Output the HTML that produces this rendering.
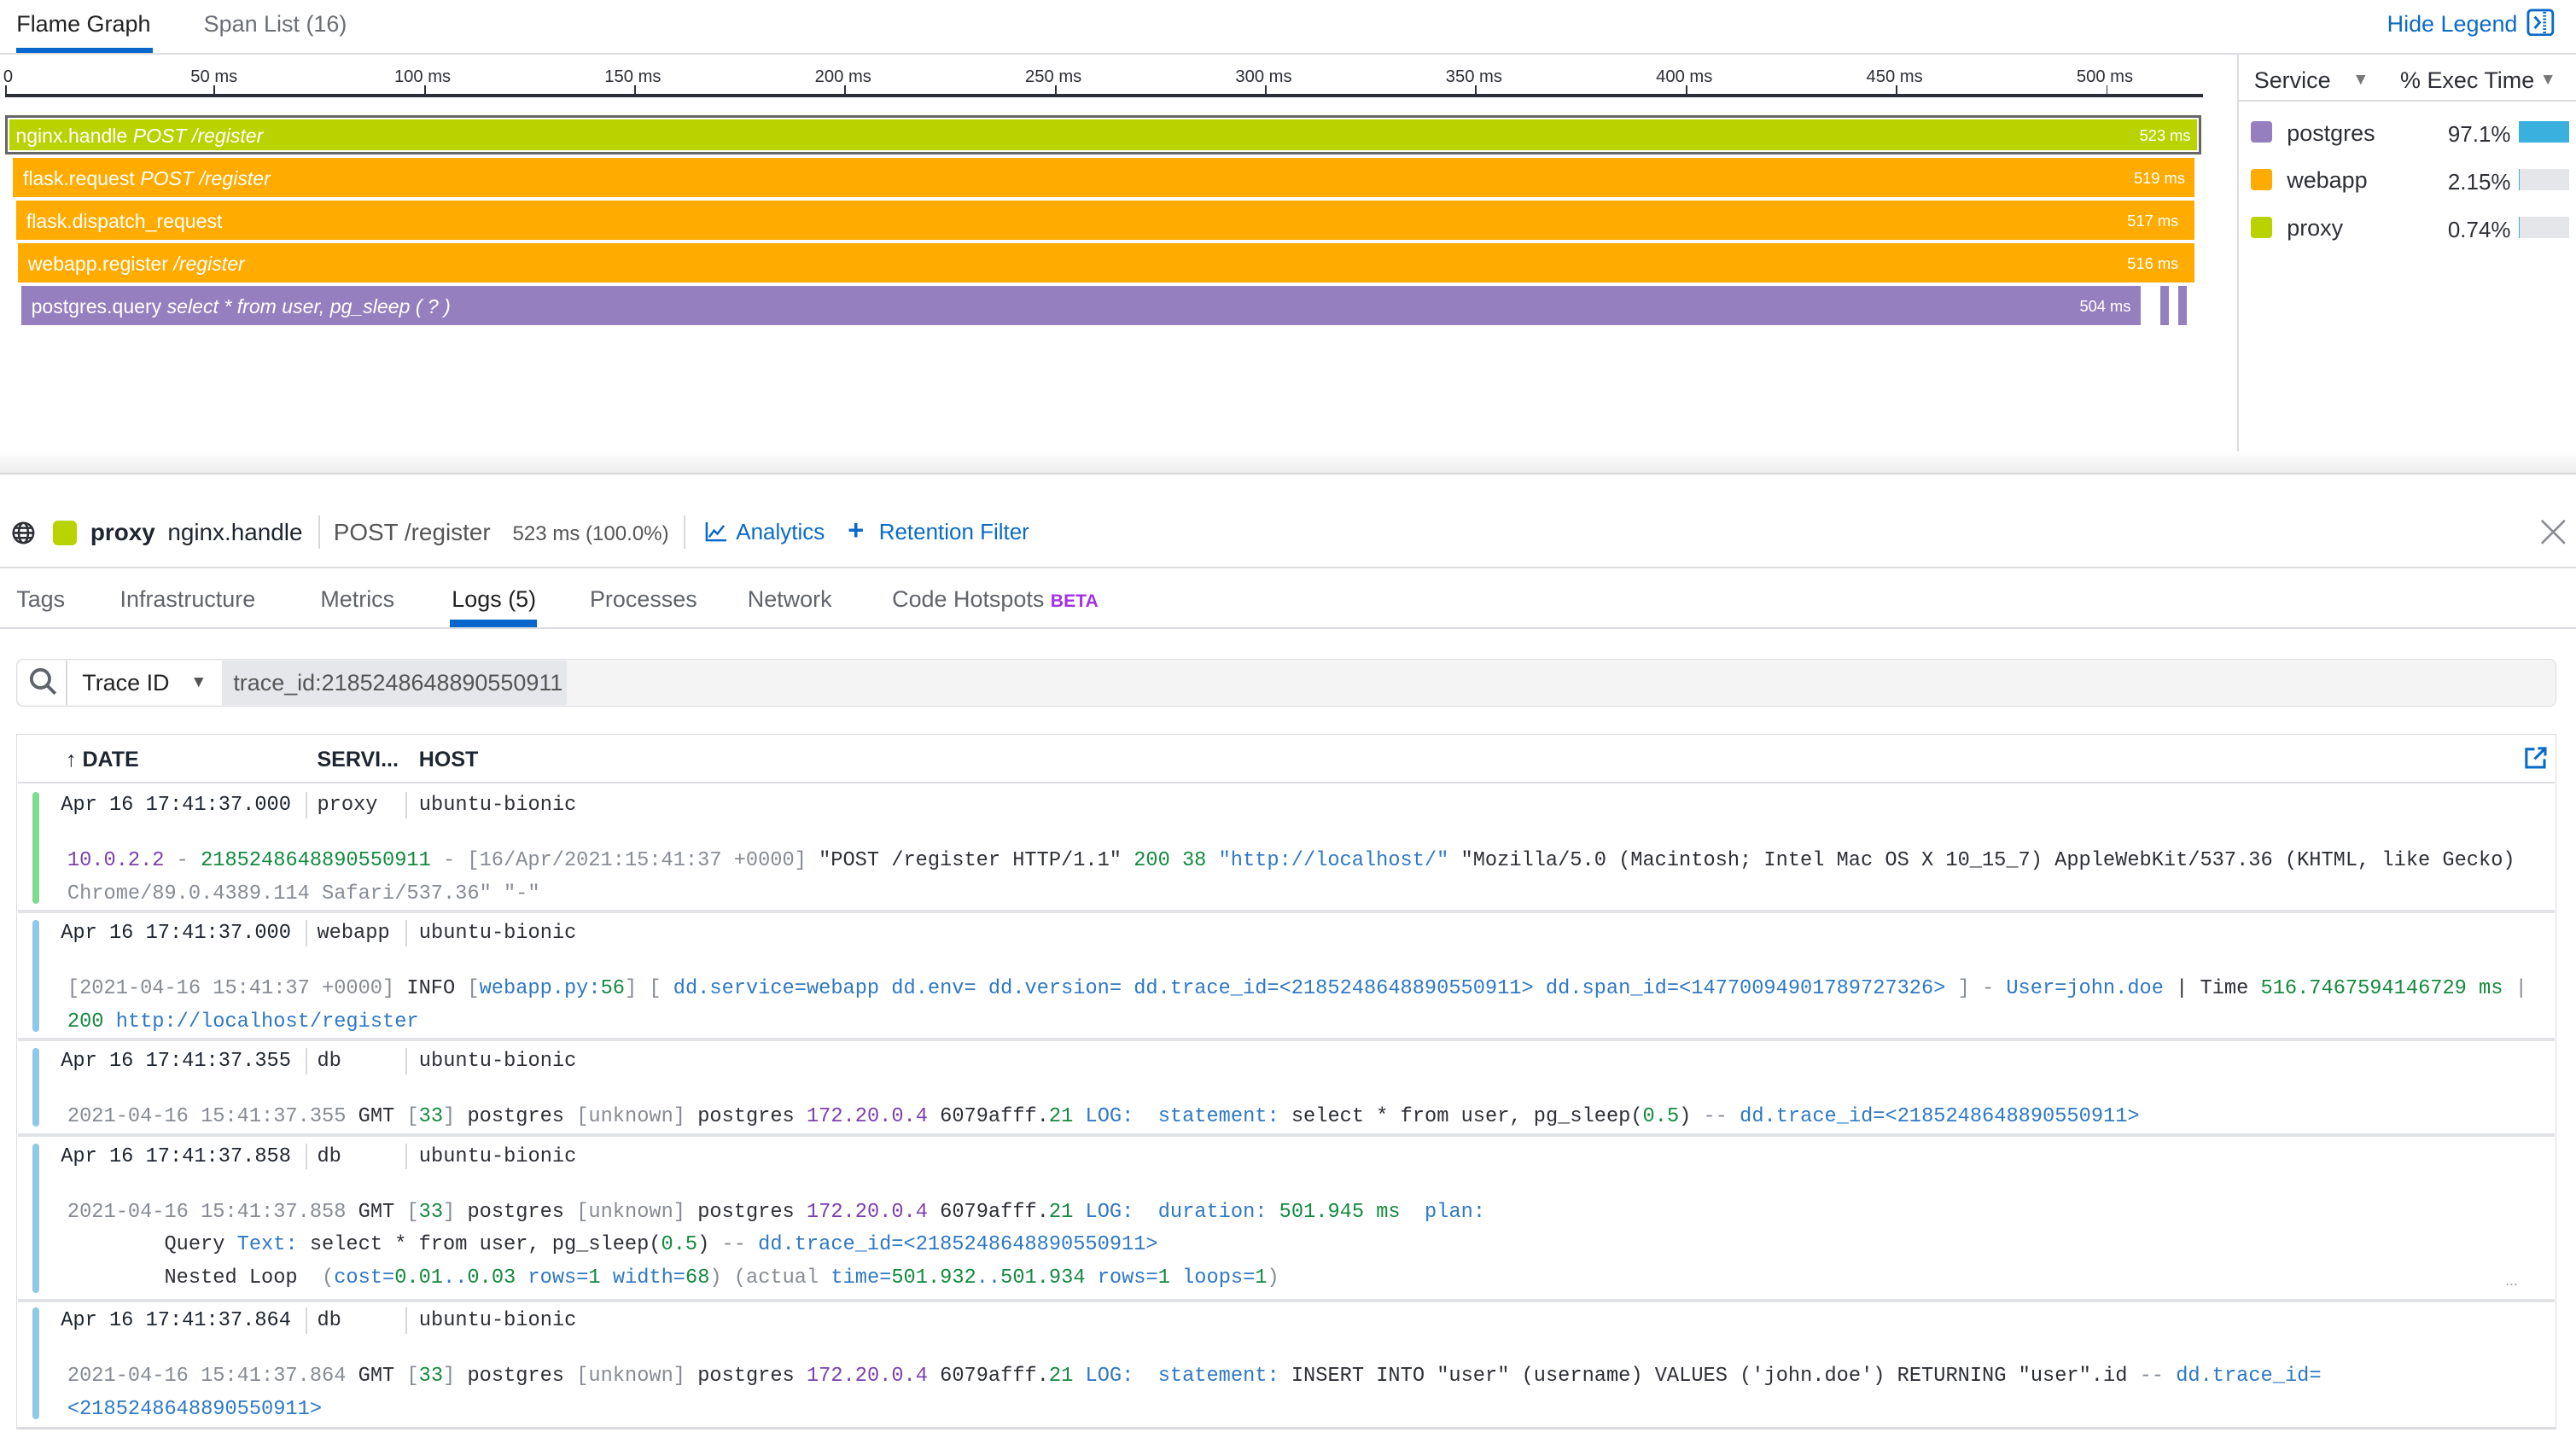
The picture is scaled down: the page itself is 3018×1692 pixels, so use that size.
<!DOCTYPE html>
<html><head><meta charset="utf-8">
<style>
html,body{margin:0;padding:0;background:#fff;overflow:hidden}
body{width:3018px;height:1692px}
#r{position:absolute;left:0;top:0;width:1568px;height:879px;zoom:1.92474;font-family:"Liberation Sans",sans-serif;color:#2d2f36;font-size:13.5px}
.a{position:absolute;white-space:nowrap}
.m{font-family:"Liberation Mono",monospace;font-size:12.3px;white-space:pre}
.bar{position:absolute;height:24px;color:#fff;font-size:12px;line-height:24px;box-sizing:border-box;padding-left:6px}
.bar .d{position:absolute;right:6px;top:0;font-size:9.5px}
.g{color:#868b94}.b{color:#2f78c4}.gr{color:#14893f}.p{color:#7c3fae}.k{color:#2d2f36}
.tick{position:absolute;top:52px;width:1px;height:6px;background:#2d2f36}
.tl{position:absolute;top:41px;font-size:10.5px;color:#2d2f36}
.sep{position:absolute;width:1px;background:#d6d8dc}
</style></head><body><div id="r">
<div class="a" style="left:10px;top:7px;font-size:14px;color:#222">Flame Graph</div>
<div style="position:absolute;left:10px;top:29px;width:83px;height:3px;background:#0566cc"></div>
<div class="a" style="left:124px;top:7px;font-size:14px;color:#6a6e75">Span List (16)</div>
<div class="a" style="left:1453px;top:7px;font-size:14px;color:#0b6ac7">Hide Legend</div>
<svg class="a" style="left:1538px;top:5px" width="17" height="17" viewBox="0 0 17 17"><rect x="1" y="1" width="15" height="15" rx="2" fill="none" stroke="#0b6ac7" stroke-width="1.5"/><path d="M5 5l3 3.5-3 3.5" fill="none" stroke="#0b6ac7" stroke-width="1.5"/><path d="M11 2v13" stroke="#0b6ac7" stroke-width="2" stroke-dasharray="1 1"/></svg>
<div style="position:absolute;left:0;top:32px;width:1568px;height:1px;background:#dcdde1"></div>
<div style="position:absolute;left:3px;top:57px;width:1338px;height:2px;background:#2d2f36"></div>
<div class="tick" style="left:3px"></div><div class="tl" style="left:2px">0</div>
<div class="tick" style="left:130px"></div><div class="tl" style="left:116px">50 ms</div>
<div class="tick" style="left:258px"></div><div class="tl" style="left:240px">100 ms</div>
<div class="tick" style="left:386px"></div><div class="tl" style="left:368px">150 ms</div>
<div class="tick" style="left:514px"></div><div class="tl" style="left:496px">200 ms</div>
<div class="tick" style="left:642px"></div><div class="tl" style="left:624px">250 ms</div>
<div class="tick" style="left:770px"></div><div class="tl" style="left:752px">300 ms</div>
<div class="tick" style="left:898px"></div><div class="tl" style="left:880px">350 ms</div>
<div class="tick" style="left:1026px"></div><div class="tl" style="left:1008px">400 ms</div>
<div class="tick" style="left:1154px"></div><div class="tl" style="left:1136px">450 ms</div>
<div class="tick" style="left:1282px"></div><div class="tl" style="left:1264px">500 ms</div>
<div class="bar" style="left:3px;top:70px;width:1337px;background:#b9d300;border:2px solid #666;box-shadow:inset 0 0 0 1px #fff;line-height:22px;padding-left:5px">nginx.handle <i>POST /register</i><span class="d" style="right:5px">523 ms</span></div>
<div class="bar" style="left:8px;top:96px;width:1328px;background:#ffab00;line-height:25px">flask.request <i>POST /register</i><span class="d">519 ms</span></div>
<div class="bar" style="left:10px;top:122px;width:1326px;background:#ffab00;line-height:25px">flask.dispatch_request<span class="d" style="right:10px">517 ms</span></div>
<div class="bar" style="left:11px;top:148px;width:1325px;background:#ffab00;line-height:25px">webapp.register <i>/register</i><span class="d" style="right:10px">516 ms</span></div>
<div class="bar" style="left:13px;top:174px;width:1290px;background:#967fbf;line-height:25px">postgres.query <i>select * from user, pg_sleep ( ? )</i><span class="d">504 ms</span></div>
<div style="position:absolute;left:1315px;top:174px;width:5px;height:24px;background:#967fbf"></div>
<div style="position:absolute;left:1326px;top:174px;width:5px;height:24px;background:#967fbf"></div>
<div style="position:absolute;left:1362px;top:33px;width:1px;height:255px;background:#dcdde1"></div>
<div style="position:absolute;left:1363px;top:61px;width:205px;height:1px;background:#dcdde1"></div>
<div class="a" style="left:1372px;top:41px;font-size:14px">Service</div>
<div class="a" style="left:1432px;top:43px;font-size:10px;color:#777">▼</div>
<div class="a" style="left:1461px;top:41px;font-size:14px">% Exec Time</div>
<div class="a" style="left:1546px;top:43px;font-size:10px;color:#777">▼</div>
<div style="position:absolute;left:1370px;top:74px;width:13px;height:13px;border-radius:2px;background:#967fbf"></div>
<div class="a" style="left:1392px;top:73px;font-size:14px">postgres</div>
<div class="a" style="left:1490px;top:74px;font-size:13.5px">97.1%</div>
<div style="position:absolute;left:1533px;top:74px;width:31px;height:13px;background:#3ab0de"></div>
<div style="position:absolute;left:1370px;top:103px;width:13px;height:13px;border-radius:2px;background:#ffab00"></div>
<div class="a" style="left:1392px;top:102px;font-size:14px">webapp</div>
<div class="a" style="left:1490px;top:103px;font-size:13.5px">2.15%</div>
<div style="position:absolute;left:1533px;top:103px;width:31px;height:13px;background:#e4e6ea;border-left:1px solid #3ab0de;box-sizing:border-box"></div>
<div style="position:absolute;left:1370px;top:132px;width:13px;height:13px;border-radius:2px;background:#b9d300"></div>
<div class="a" style="left:1392px;top:131px;font-size:14px">proxy</div>
<div class="a" style="left:1490px;top:132px;font-size:13.5px">0.74%</div>
<div style="position:absolute;left:1533px;top:132px;width:31px;height:13px;background:#e4e6ea;border-left:1px solid #3ab0de;box-sizing:border-box"></div>
<div style="position:absolute;left:0;top:275px;width:1568px;height:13px;background:linear-gradient(#fff,#ececec)"></div>
<div style="position:absolute;left:0;top:288px;width:1568px;height:1px;background:#d8d8d8"></div>
<svg class="a" style="left:7px;top:317px" width="15" height="15" viewBox="0 0 16 16" fill="none" stroke="#2d2f36" stroke-width="1.4"><circle cx="8" cy="8" r="6.5"/><ellipse cx="8" cy="8" rx="3" ry="6.5"/><path d="M1.5 8h13M2.5 4.8h11M2.5 11.2h11"/></svg>
<div style="position:absolute;left:32px;top:317px;width:15px;height:15px;border-radius:3px;background:#b9d300"></div>
<div class="a" style="left:55px;top:316px;font-size:14.5px;font-weight:bold;color:#1d2530">proxy</div>
<div class="a" style="left:102px;top:316px;font-size:14.5px;color:#1d2530">nginx.handle</div>
<div class="sep" style="left:194px;top:314px;height:20px"></div>
<div class="a" style="left:203px;top:316px;font-size:14.5px;color:#555">POST /register</div>
<div class="a" style="left:312px;top:318px;font-size:12.5px;color:#555">523 ms (100.0%)</div>
<div class="sep" style="left:416px;top:314px;height:20px"></div>
<svg class="a" style="left:429px;top:318px" width="13" height="12" viewBox="0 0 13 12" fill="none" stroke="#0b6ac7" stroke-width="1.3"><path d="M1 0v11h12"/><path d="M2.5 9l3-4 2 2 4-5"/></svg>
<div class="a" style="left:448px;top:316px;font-size:13.5px;color:#0b6ac7">Analytics</div>
<div class="a" style="left:516px;top:313px;font-size:17px;font-weight:bold;color:#0b6ac7">+</div>
<div class="a" style="left:535px;top:316px;font-size:13.5px;color:#0b6ac7">Retention Filter</div>
<svg class="a" style="left:1545px;top:315px" width="18" height="18" viewBox="0 0 18 18" stroke="#8a8d92" stroke-width="1.4"><path d="M2 2l14 14M16 2L2 16"/></svg>
<div style="position:absolute;left:0;top:345px;width:1568px;height:1px;background:#dcdde1"></div>
<div class="a" style="left:10px;top:357px;font-size:14px;color:#60646b">Tags</div>
<div class="a" style="left:73px;top:357px;font-size:14px;color:#60646b">Infrastructure</div>
<div class="a" style="left:195px;top:357px;font-size:14px;color:#60646b">Metrics</div>
<div class="a" style="left:275px;top:357px;font-size:14px;color:#222">Logs (5)</div>
<div style="position:absolute;left:274px;top:377px;width:53px;height:5px;background:#0566cc"></div>
<div class="a" style="left:359px;top:357px;font-size:14px;color:#60646b">Processes</div>
<div class="a" style="left:455px;top:357px;font-size:14px;color:#60646b">Network</div>
<div class="a" style="left:543px;top:357px;font-size:14px;color:#60646b">Code Hotspots <b style="color:#a232e6;font-size:11px">BETA</b></div>
<div style="position:absolute;left:0;top:382px;width:1568px;height:1px;background:#dcdde1"></div>
<div style="position:absolute;left:10px;top:401px;width:1546px;height:29px;box-sizing:border-box;border:1px solid #dcdde1;border-radius:4px;background:#f4f4f5"></div>
<div style="position:absolute;left:11px;top:402px;width:124px;height:27px;background:#fff;border-radius:4px 0 0 4px"></div>
<div class="sep" style="left:40px;top:402px;height:27px"></div>
<svg class="a" style="left:17px;top:406px" width="18" height="18" viewBox="0 0 18 18" fill="none" stroke="#5f636a" stroke-width="2"><circle cx="7.5" cy="7.5" r="5.5"/><path d="M11.5 11.5l5 5"/></svg>
<div class="a" style="left:50px;top:408px;font-size:14px;color:#222">Trace ID</div>
<div class="a" style="left:116px;top:410px;font-size:10px;color:#555">▼</div>
<div style="position:absolute;left:135px;top:402px;width:210px;height:27px;background:#e6e7ea"></div>
<div class="a" style="left:142px;top:408px;font-size:14px;color:#555">trace_id:2185248648890550911</div>
<div style="position:absolute;left:10px;top:447px;width:1546px;height:423px;box-sizing:border-box;border:1px solid #dcdde1;border-bottom:2px solid #dcdde1"></div>
<div style="position:absolute;left:11px;top:476px;width:1544px;height:1px;background:#dcdde1"></div>
<div class="a" style="left:40px;top:455px;font-size:13px;font-weight:bold;color:#1d2530">↑ DATE</div>
<div class="a" style="left:193px;top:455px;font-size:13px;font-weight:bold;color:#1d2530">SERVI...</div>
<div class="a" style="left:255px;top:455px;font-size:13px;font-weight:bold;color:#1d2530">HOST</div>
<svg class="a" style="left:1536px;top:454px" width="15" height="15" viewBox="0 0 15 15" fill="none" stroke="#0b6ac7" stroke-width="1.6"><path d="M7 2H2v11h11V8"/><path d="M7 8l6-6M9 1.5h4.5V6"/></svg>

<div style="position:absolute;left:20px;top:482px;width:4px;height:68px;border-radius:2px;background:#7fdb90"></div>
<div class="a m" style="left:37px;top:483px;color:#1d2530">Apr 16 17:41:37.000</div>
<div class="sep" style="left:186px;top:482px;height:16px"></div>
<div class="a m" style="left:193px;top:483px">proxy</div>
<div class="sep" style="left:247px;top:482px;height:16px"></div>
<div class="a m" style="left:255px;top:483px">ubuntu-bionic</div>
<div class="a m g" style="left:41px;top:517px"><span class="p">10.0.2.2</span> - <span class="gr">2185248648890550911</span> - [16/Apr/2021:15:41:37 +0000] <span class="k">"POST /register HTTP/1.1"</span> <span class="gr">200 38</span> <span class="b">"http://localhost/"</span> <span class="k">"Mozilla/5.0 (Macintosh; Intel Mac OS X 10_15_7) AppleWebKit/537.36 (KHTML, like Gecko)</span></div>
<div class="a m g" style="left:41px;top:537px">Chrome/89.0.4389.114 Safari/537.36" "-"</div>
<div style="position:absolute;left:11px;top:554px;width:1544px;height:2px;background:#e2e3e6"></div>
<div style="position:absolute;left:20px;top:560px;width:4px;height:68px;border-radius:2px;background:#8ecae6"></div>
<div class="a m" style="left:37px;top:561px;color:#1d2530">Apr 16 17:41:37.000</div>
<div class="sep" style="left:186px;top:560px;height:16px"></div>
<div class="a m" style="left:193px;top:561px">webapp</div>
<div class="sep" style="left:247px;top:560px;height:16px"></div>
<div class="a m" style="left:255px;top:561px">ubuntu-bionic</div>
<div class="a m g" style="left:41px;top:595px">[2021-04-16 15:41:37 +0000] <span class="k">INFO</span> [<span class="b">webapp.py:</span><span class="gr">56</span>] [ <span class="b">dd.service=webapp dd.env= dd.version= dd.trace_id=&lt;2185248648890550911&gt; dd.span_id=&lt;14770094901789727326&gt;</span> ] - <span class="b">User=john.doe</span> <span class="k">| Time</span> <span class="gr">516.7467594146729 ms</span> |</div>
<div class="a m" style="left:41px;top:615px"><span class="gr">200</span> <span class="b">http://localhost/register</span></div>
<div style="position:absolute;left:11px;top:632px;width:1544px;height:2px;background:#e2e3e6"></div>
<div style="position:absolute;left:20px;top:638px;width:4px;height:48px;border-radius:2px;background:#8ecae6"></div>
<div class="a m" style="left:37px;top:639px;color:#1d2530">Apr 16 17:41:37.355</div>
<div class="sep" style="left:186px;top:638px;height:16px"></div>
<div class="a m" style="left:193px;top:639px">db</div>
<div class="sep" style="left:247px;top:638px;height:16px"></div>
<div class="a m" style="left:255px;top:639px">ubuntu-bionic</div>
<div class="a m g" style="left:41px;top:673px">2021-04-16 15:41:37.355 <span class="k">GMT</span> [<span class="gr">33</span>] <span class="k">postgres</span> [unknown] <span class="k">postgres</span> <span class="p">172.20.0.4</span> <span class="k">6079afff.</span><span class="gr">21</span> <span class="b">LOG:  statement:</span> <span class="k">select * from user, pg_sleep(</span><span class="gr">0.5</span><span class="k">)</span> -- <span class="b">dd.trace_id=&lt;2185248648890550911&gt;</span></div>
<div style="position:absolute;left:11px;top:690px;width:1544px;height:2px;background:#e2e3e6"></div>
<div style="position:absolute;left:20px;top:696px;width:4px;height:91px;border-radius:2px;background:#8ecae6"></div>
<div class="a m" style="left:37px;top:697px;color:#1d2530">Apr 16 17:41:37.858</div>
<div class="sep" style="left:186px;top:696px;height:16px"></div>
<div class="a m" style="left:193px;top:697px">db</div>
<div class="sep" style="left:247px;top:696px;height:16px"></div>
<div class="a m" style="left:255px;top:697px">ubuntu-bionic</div>
<div class="a m g" style="left:41px;top:731px">2021-04-16 15:41:37.858 <span class="k">GMT</span> [<span class="gr">33</span>] <span class="k">postgres</span> [unknown] <span class="k">postgres</span> <span class="p">172.20.0.4</span> <span class="k">6079afff.</span><span class="gr">21</span> <span class="b">LOG:  duration:</span> <span class="gr">501.945 ms</span>  <span class="b">plan:</span></div>
<div class="a m k" style="left:100px;top:751px">Query <span class="b">Text:</span> select * from user, pg_sleep(<span class="gr">0.5</span>) <span class="g">--</span> <span class="b">dd.trace_id=&lt;2185248648890550911&gt;</span></div>
<div class="a m k" style="left:100px;top:771px">Nested Loop  <span class="g">(</span><span class="b">cost=</span><span class="gr">0.01</span><span class="b">..</span><span class="gr">0.03</span> <span class="b">rows=</span><span class="gr">1</span> <span class="b">width=</span><span class="gr">68</span><span class="g">) (actual</span> <span class="b">time=</span><span class="gr">501.932</span><span class="b">..</span><span class="gr">501.934</span> <span class="b">rows=</span><span class="gr">1</span> <span class="b">loops=</span><span class="gr">1</span><span class="g">)</span></div>
<div class="a" style="left:1525px;top:774px;font-size:9px;color:#999">...</div>
<div style="position:absolute;left:11px;top:791px;width:1544px;height:2px;background:#e2e3e6"></div>
<div style="position:absolute;left:20px;top:796px;width:4px;height:68px;border-radius:2px;background:#8ecae6"></div>
<div class="a m" style="left:37px;top:797px;color:#1d2530">Apr 16 17:41:37.864</div>
<div class="sep" style="left:186px;top:796px;height:16px"></div>
<div class="a m" style="left:193px;top:797px">db</div>
<div class="sep" style="left:247px;top:796px;height:16px"></div>
<div class="a m" style="left:255px;top:797px">ubuntu-bionic</div>
<div class="a m g" style="left:41px;top:831px">2021-04-16 15:41:37.864 <span class="k">GMT</span> [<span class="gr">33</span>] <span class="k">postgres</span> [unknown] <span class="k">postgres</span> <span class="p">172.20.0.4</span> <span class="k">6079afff.</span><span class="gr">21</span> <span class="b">LOG:  statement:</span> <span class="k">INSERT INTO "user" (username) VALUES ('john.doe') RETURNING "user".id</span> -- <span class="b">dd.trace_id=</span></div>
<div class="a m b" style="left:41px;top:851px">&lt;2185248648890550911&gt;</div>
</div></body></html>
